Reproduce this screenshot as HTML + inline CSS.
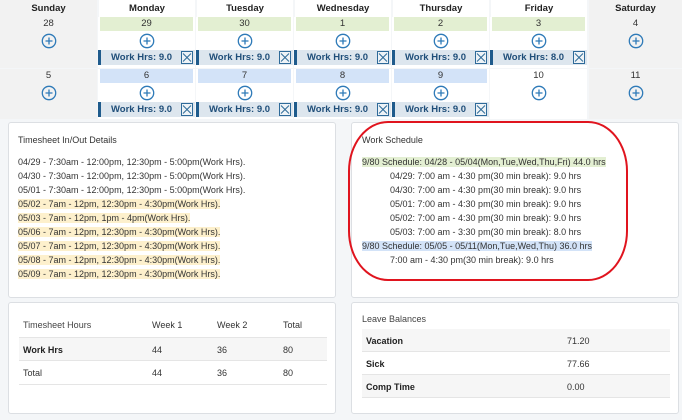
<!DOCTYPE html>
<html><head><style>
*{margin:0;padding:0;box-sizing:border-box}
body{width:682px;height:420px;background:#f4f6f8;font-family:"Liberation Sans",sans-serif;position:relative;overflow:hidden;color:#333}
.a{position:absolute}
.hd{position:absolute;top:0;height:17px;font-size:9.5px;font-weight:bold;text-align:center;line-height:17px;background:#fff;color:#222}
.cell{position:absolute;background:#fff}
.we{background:#f2f2f2}
.band{position:absolute;left:2px;right:2px;top:0;height:14px;font-size:9.5px;text-align:center;line-height:14px}
.g{background:#e3efd2}.b{background:#d3e3f8}
.num{position:absolute;left:0;right:0;top:0;height:14px;font-size:9.5px;text-align:center;line-height:14px}
.plus{position:absolute;top:16px;left:50%;margin-left:-8px;width:16px;height:16px}
.bar{position:absolute;left:0;right:0;top:33px;height:15px;background:#dde6ee;border-left:3px solid #1f5b8c;font-size:9.5px;font-weight:bold;color:#1f4e79;line-height:15px;padding-left:10px}
.x{position:absolute;right:2px;top:1px;width:12px;height:13px}
.panel{position:absolute;background:#fff;border:1px solid #dcdfe3;border-radius:3px}
.t{font-size:9px;line-height:14px;white-space:nowrap}
.y{background:#fdf0cc}
</style></head><body>
<svg width="0" height="0" style="position:absolute">
<defs>
<symbol id="p" viewBox="0 0 16 16"><circle cx="8" cy="8" r="6.7" fill="none" stroke="#2e7ab8" stroke-width="1.3"/><path d="M4.5 8H11.5M8 4.5V11.5" stroke="#2e7ab8" stroke-width="1.3"/></symbol>
<symbol id="x" viewBox="0 0 12 13"><rect x="0.5" y="0.5" width="11" height="12" fill="#eef3f7" stroke="#2e6a99"/><path d="M2 2.5L10 10.5M10 2.5L2 10.5" stroke="#2e6a99" stroke-width="1"/></symbol>
</defs></svg>
<div class="hd" style="left:0;width:97px;background:#f2f2f2">Sunday</div>
<div class="hd" style="left:99px;width:96px">Monday</div>
<div class="hd" style="left:197px;width:96px">Tuesday</div>
<div class="hd" style="left:295px;width:96px">Wednesday</div>
<div class="hd" style="left:393px;width:96px">Thursday</div>
<div class="hd" style="left:491px;width:96px">Friday</div>
<div class="hd" style="left:589px;width:93px;background:#f2f2f2">Saturday</div>

<div class="cell we" style="left:0;top:17px;width:97px;height:51px"><div class="num">28</div><svg class="plus"><use href="#p"/></svg></div>
<div class="cell" style="left:98px;top:17px;width:97px;height:51px"><div class="band g">29</div><svg class="plus"><use href="#p"/></svg><div class="bar">Work Hrs: 9.0<svg class="x"><use href="#x"/></svg></div></div>
<div class="cell" style="left:196px;top:17px;width:97px;height:51px"><div class="band g">30</div><svg class="plus"><use href="#p"/></svg><div class="bar">Work Hrs: 9.0<svg class="x"><use href="#x"/></svg></div></div>
<div class="cell" style="left:294px;top:17px;width:97px;height:51px"><div class="band g">1</div><svg class="plus"><use href="#p"/></svg><div class="bar">Work Hrs: 9.0<svg class="x"><use href="#x"/></svg></div></div>
<div class="cell" style="left:392px;top:17px;width:97px;height:51px"><div class="band g">2</div><svg class="plus"><use href="#p"/></svg><div class="bar">Work Hrs: 9.0<svg class="x"><use href="#x"/></svg></div></div>
<div class="cell" style="left:490px;top:17px;width:97px;height:51px"><div class="band g">3</div><svg class="plus"><use href="#p"/></svg><div class="bar">Work Hrs: 8.0<svg class="x"><use href="#x"/></svg></div></div>
<div class="cell we" style="left:589px;top:17px;width:93px;height:51px"><div class="num">4</div><svg class="plus"><use href="#p"/></svg></div>

<div class="cell we" style="left:0;top:69px;width:97px;height:50px"><div class="num">5</div><svg class="plus"><use href="#p"/></svg></div>
<div class="cell" style="left:98px;top:69px;width:97px;height:50px"><div class="band b">6</div><svg class="plus"><use href="#p"/></svg><div class="bar">Work Hrs: 9.0<svg class="x"><use href="#x"/></svg></div></div>
<div class="cell" style="left:196px;top:69px;width:97px;height:50px"><div class="band b">7</div><svg class="plus"><use href="#p"/></svg><div class="bar">Work Hrs: 9.0<svg class="x"><use href="#x"/></svg></div></div>
<div class="cell" style="left:294px;top:69px;width:97px;height:50px"><div class="band b">8</div><svg class="plus"><use href="#p"/></svg><div class="bar">Work Hrs: 9.0<svg class="x"><use href="#x"/></svg></div></div>
<div class="cell" style="left:392px;top:69px;width:97px;height:50px"><div class="band b">9</div><svg class="plus"><use href="#p"/></svg><div class="bar">Work Hrs: 9.0<svg class="x"><use href="#x"/></svg></div></div>
<div class="cell" style="left:490px;top:69px;width:97px;height:50px"><div class="num">10</div><svg class="plus"><use href="#p"/></svg></div>
<div class="cell we" style="left:589px;top:69px;width:93px;height:50px"><div class="num">11</div><svg class="plus"><use href="#p"/></svg></div>

<div class="panel" style="left:8px;top:122px;width:328px;height:176px">
 <div class="a t" style="left:9px;top:10px">Timesheet In/Out Details</div>
 <div class="a" style="left:9px;top:32px">
  <div class="t">04/29 - 7:30am - 12:00pm, 12:30pm - 5:00pm(Work Hrs).</div>
  <div class="t">04/30 - 7:30am - 12:00pm, 12:30pm - 5:00pm(Work Hrs).</div>
  <div class="t">05/01 - 7:30am - 12:00pm, 12:30pm - 5:00pm(Work Hrs).</div>
  <div class="t"><span class="y">05/02 - 7am - 12pm, 12:30pm - 4:30pm(Work Hrs).</span></div>
  <div class="t"><span class="y">05/03 - 7am - 12pm, 1pm - 4pm(Work Hrs).</span></div>
  <div class="t"><span class="y">05/06 - 7am - 12pm, 12:30pm - 4:30pm(Work Hrs).</span></div>
  <div class="t"><span class="y">05/07 - 7am - 12pm, 12:30pm - 4:30pm(Work Hrs).</span></div>
  <div class="t"><span class="y">05/08 - 7am - 12pm, 12:30pm - 4:30pm(Work Hrs).</span></div>
  <div class="t"><span class="y">05/09 - 7am - 12pm, 12:30pm - 4:30pm(Work Hrs).</span></div>
 </div>
</div>

<div class="panel" style="left:351px;top:122px;width:328px;height:176px">
 <div class="a t" style="left:10px;top:10px">Work Schedule</div>
 <div class="a" style="left:10px;top:32px">
  <div class="t"><span style="background:#e3efd2">9/80 Schedule: 04/28 - 05/04(Mon,Tue,Wed,Thu,Fri) 44.0 hrs</span></div>
  <div class="t" style="padding-left:28px">04/29: 7:00 am - 4:30 pm(30 min break): 9.0 hrs</div>
  <div class="t" style="padding-left:28px">04/30: 7:00 am - 4:30 pm(30 min break): 9.0 hrs</div>
  <div class="t" style="padding-left:28px">05/01: 7:00 am - 4:30 pm(30 min break): 9.0 hrs</div>
  <div class="t" style="padding-left:28px">05/02: 7:00 am - 4:30 pm(30 min break): 9.0 hrs</div>
  <div class="t" style="padding-left:28px">05/03: 7:00 am - 3:30 pm(30 min break): 8.0 hrs</div>
  <div class="t"><span style="background:#d3e3f8">9/80 Schedule: 05/05 - 05/11(Mon,Tue,Wed,Thu) 36.0 hrs</span></div>
  <div class="t" style="padding-left:28px">7:00 am - 4:30 pm(30 min break): 9.0 hrs</div>
 </div>
</div>
<div class="a" style="left:348px;top:121px;width:280px;height:160px;border:2px solid #e0141e;border-radius:40px/50px"></div>

<div class="panel" style="left:8px;top:302px;width:328px;height:112px">
 <div class="a t" style="left:14px;top:15px;color:#444">Timesheet Hours</div>
 <div class="a t" style="left:143px;top:15px">Week 1</div>
 <div class="a t" style="left:208px;top:15px">Week 2</div>
 <div class="a t" style="left:274px;top:15px">Total</div>
 <div class="a" style="left:10px;top:34px;width:308px;height:24px;background:#f6f6f6;border-top:1px solid #e5e5e5;border-bottom:1px solid #e5e5e5"></div>
 <div class="a t" style="left:14px;top:40px;font-weight:bold;color:#222">Work Hrs</div>
 <div class="a t" style="left:143px;top:40px">44</div>
 <div class="a t" style="left:208px;top:40px">36</div>
 <div class="a t" style="left:274px;top:40px">80</div>
 <div class="a t" style="left:14px;top:63px">Total</div>
 <div class="a t" style="left:143px;top:63px">44</div>
 <div class="a t" style="left:208px;top:63px">36</div>
 <div class="a t" style="left:274px;top:63px">80</div>
 <div class="a" style="left:10px;top:81px;width:308px;height:1px;background:#e5e5e5"></div>
</div>

<div class="panel" style="left:351px;top:302px;width:328px;height:112px">
 <div class="a t" style="left:10px;top:9px;color:#444">Leave Balances</div>
 <div class="a" style="left:10px;top:26px;width:308px;height:23px;background:#f6f6f6;border-bottom:1px solid #e5e5e5"></div>
 <div class="a" style="left:10px;top:49px;width:308px;height:23px;border-bottom:1px solid #e5e5e5"></div>
 <div class="a" style="left:10px;top:72px;width:308px;height:23px;background:#f6f6f6;border-bottom:1px solid #e5e5e5"></div>
 <div class="a t" style="left:14px;top:31px;font-weight:bold;color:#222">Vacation</div>
 <div class="a t" style="left:215px;top:31px">71.20</div>
 <div class="a t" style="left:14px;top:54px;font-weight:bold;color:#222">Sick</div>
 <div class="a t" style="left:215px;top:54px">77.66</div>
 <div class="a t" style="left:14px;top:77px;font-weight:bold;color:#222">Comp Time</div>
 <div class="a t" style="left:215px;top:77px">0.00</div>
</div>
</body></html>
